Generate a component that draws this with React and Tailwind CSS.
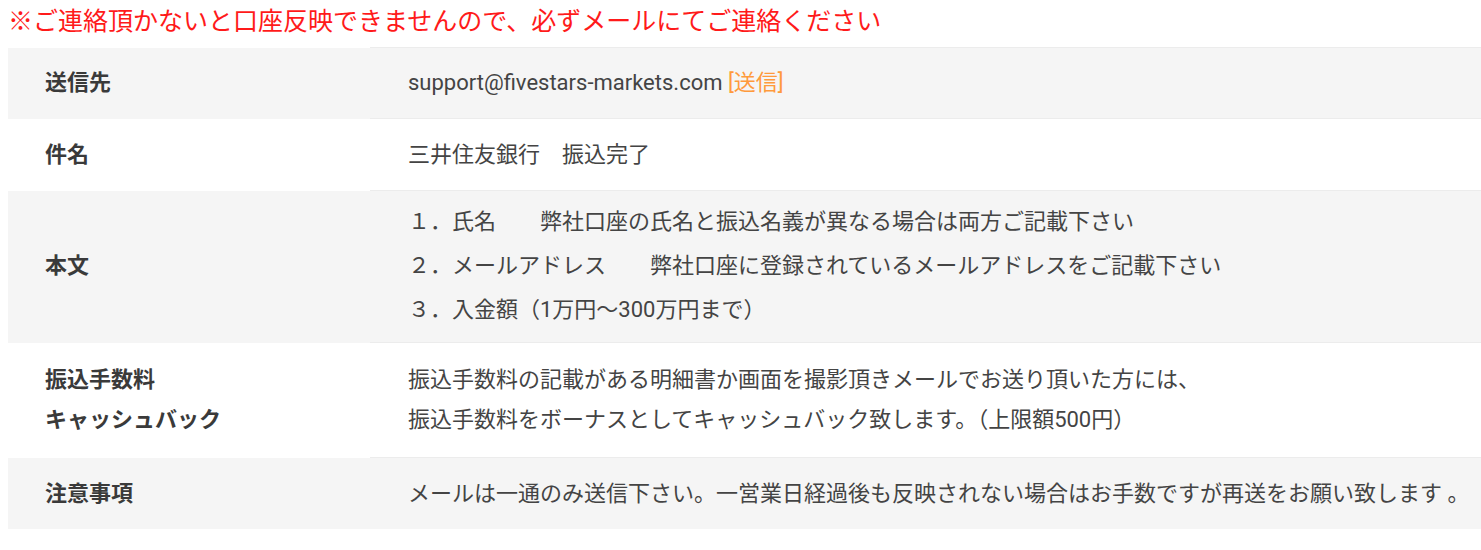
const rows = [
  {
    label: ["送信先"],
    value: (
      <>
        support@fivestars-markets.com <span className="text-[#ff9a3c]">[送信]</span>
      </>
    ),
    bg: "bg-[#f5f5f5]",
    pad: "py-[18px]",
    lead: "leading-[34px]",
  },
  {
    label: ["件名"],
    value: <>三井住友銀行　振込完了</>,
    bg: "bg-white",
    pad: "py-[18px]",
    lead: "leading-[35px]",
  },
  {
    label: ["本文"],
    value: (
      <>
        <p>１．氏名　　弊社口座の氏名と振込名義が異なる場合は両方ご記載下さい</p>
        <p>２．メールアドレス　　弊社口座に登録されているメールアドレスをご記載下さい</p>
        <p>３．入金額（1万円～300万円まで）</p>
      </>
    ),
    bg: "bg-[#f5f5f5]",
    pad: "pt-[9px] pb-[10px]",
    lead: "leading-[44px]",
  },
  {
    label: ["振込手数料", "キャッシュバック"],
    value: (
      <>
        <p>振込手数料の記載がある明細書か画面を撮影頂きメールでお送り頂いた方には、</p>
        <p>振込手数料をボーナスとしてキャッシュバック致します。（上限額500円）</p>
      </>
    ),
    bg: "bg-white",
    pad: "py-[17px]",
    lead: "leading-[40px]",
  },
  {
    label: ["注意事項"],
    value: <>メールは一通のみ送信下さい。一営業日経過後も反映されない場合はお手数ですが再送をお願い致します 。</>,
    bg: "bg-[#f5f5f5]",
    pad: "py-[18px]",
    lead: "leading-[35px]",
  },
]

export default function App() {
  return (
    <div className="bg-white min-h-[550px] pl-2 pt-[7px] font-['Roboto','Noto_Sans_CJK_JP',sans-serif]">
      <p className="text-[#ff1a1a] text-[25px] leading-[30px] mb-[10px] whitespace-nowrap">
        ※ご連絡頂かないと口座反映できませんので、必ずメールにてご連絡ください
      </p>
      <table className="w-full border-collapse">
        <tbody>
          {rows.map((r, i) => (
            <tr key={i} className={r.bg}>
              <th className={`w-[362px] text-left align-middle pl-[37px] font-bold text-[22px] text-[#3a3a3a] ${r.pad} ${r.lead}`}>
                {r.label.map(l => (
                  <p key={l}>{l}</p>
                ))}
              </th>
              <td className={`pl-[38px] text-[22px] text-[#444] whitespace-nowrap border-t border-[#ececec] ${r.pad} ${r.lead}`}>
                {r.value}
              </td>
            </tr>
          ))}
        </tbody>
      </table>
    </div>
  )
}
